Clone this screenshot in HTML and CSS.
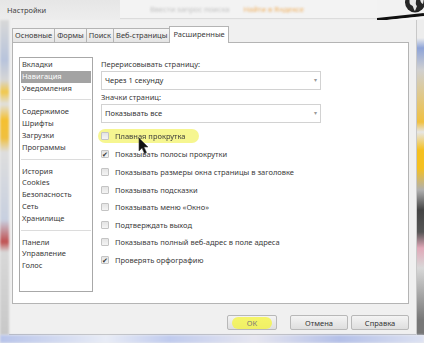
FILE: index.html
```html
<!DOCTYPE html>
<html lang="ru">
<head>
  <meta charset="UTF-8" />
  <title>Настройки</title>
  <link rel="stylesheet" href="styles.css">
</head>
<body>
  <div class="titlebar">
    <span class="title">Настройки</span>
    <div class="search">
      <span class="blur-gray">Ввести запрос поиска</span>
      <span class="blur-orange">Найти в Яндексе</span>
    </div>
    <svg class="corner" width="47" height="22" viewBox="0 0 47 22">
      <rect x="0" y="0" width="47" height="22" fill="#f2f2f2"/>
      <circle cx="38" cy="2.5" r="10" fill="#262626"/>
      <path d="M31 -4 C34 -1 31 3 34 5 C37 6 36 9 38 11 L40 6 C37 3 41 0 38 -4 Z" fill="#e6e6e6"/>
      <path d="M42 -2 C44 0 43 3 46 4 L47 -2 Z" fill="#e6e6e6"/>
      <path d="M0 19.5 L47 14.5" stroke="#111" stroke-width="3"/>
      <path d="M0 22 L47 17.5" stroke="#f8f8f8" stroke-width="2"/>
    </svg>
  </div>

  <div class="frame">
    <div class="edge-left"></div>

    <div class="dialog">
      <div class="tabs">
        <div class="tab">Основные</div>
        <div class="tab">Формы</div>
        <div class="tab">Поиск</div>
        <div class="tab">Веб-страницы</div>
        <div class="tab active">Расширенные</div>
      </div>

      <div class="panel">
        <!-- left category list -->
        <div class="listbox">
          <div class="group">
            <div class="item">Вкладки</div>
            <div class="item selected">Навигация</div>
            <div class="item">Уведомления</div>
          </div>
          <div class="group">
            <div class="item">Содержимое</div>
            <div class="item">Шрифты</div>
            <div class="item">Загрузки</div>
            <div class="item">Программы</div>
          </div>
          <div class="group">
            <div class="item">История</div>
            <div class="item">Cookies</div>
            <div class="item">Безопасность</div>
            <div class="item">Сеть</div>
            <div class="item">Хранилище</div>
          </div>
          <div class="group">
            <div class="item">Панели</div>
            <div class="item">Управление</div>
            <div class="item">Голос</div>
          </div>
        </div>

        <!-- navigation options -->
        <div class="options">
          <div class="label">Перерисовывать страницу:</div>
          <div class="select">Через 1 секунду <span class="arrow">▾</span></div>
          <div class="label">Значки страниц:</div>
          <div class="select">Показывать все <span class="arrow">▾</span></div>

          <div class="checks">
            <div class="check marked"><span class="box"></span>Плавная прокрутка</div>
            <div class="check"><span class="box on">✔</span>Показывать полосы прокрутки</div>
            <div class="check"><span class="box"></span>Показывать размеры окна страницы в заголовке</div>
            <div class="check"><span class="box"></span>Показывать подсказки</div>
            <div class="check"><span class="box"></span>Показывать меню «Окно»</div>
            <div class="check"><span class="box"></span>Подтверждать выход</div>
            <div class="check"><span class="box"></span>Показывать полный веб-адрес в поле адреса</div>
            <div class="check"><span class="box on">✔</span>Проверять орфографию</div>
          </div>
        </div>
      </div>

      <div class="buttons">
        <button class="btn ok"><span class="mark">ОК</span></button>
        <button class="btn">Отмена</button>
        <button class="btn">Справка</button>
      </div>
    </div>

    <div class="edge-right"></div>
  </div>

  <div class="taskbar"></div>

  <svg class="cursor" width="12" height="18" viewBox="0 0 12 18">
    <path d="M1 1 L1 14 L4 11 L6.5 16.5 L8.5 15.5 L6 10 L10 10 Z" fill="#111" stroke="#444" stroke-width="0.6"/>
  </svg>
</body>
</html>
```

FILE: styles.css
```css
body {
  margin: 0;
  width: 424px;
  height: 343px;
  overflow: hidden;
  background: #ececec;
  font-family: 'Noto Sans', sans-serif;
  font-size: 7.5px;
  color: #3a3a3a;
  position: relative;
}

.titlebar {
  height: 20px;
  display: flex;
  align-items: center;
  background: linear-gradient(#e6e6e6, #ededed);
}

.title {
  padding-left: 7px;
  width: 113px;
  flex-shrink: 0;
  color: #444;
}

.search {
  flex: 1;
  min-width: 0;
  height: 18px;
  align-self: flex-start;
  background: #f3f3f3;
  border-bottom: 1px solid #dcdcdc;
  display: flex;
  align-items: center;
  gap: 14px;
  padding-left: 30px;
  overflow: hidden;
}

.blur-gray {
  color: #c2c2c2;
  filter: blur(1.3px);
  white-space: nowrap;
}

.blur-orange {
  color: #f0b060;
  filter: blur(1.2px);
  white-space: nowrap;
}

.corner {
  align-self: flex-start;
  display: block;
  flex-shrink: 0;
}

.frame {
  display: flex;
  height: 315px;
}

.edge-left {
  width: 9px;
  background: linear-gradient(#d8d8d8 0, #b8c4dc 40px, #d6d6d6 60px, #f2c84a 72px, #e0e0e0 84px,
    #f5c030 100px, #f0c040 118px, #dedede 132px, #c8d0e0 200px, #c05050 222px, #d8d8d8 232px, #c8c8c8 315px);
  filter: blur(1px);
}

.edge-right {
  width: 7px;
  background: linear-gradient(#ededed 0, #ededed 18px, #8ea4d8 28px, #d0d0d0 50px, #f0c040 102px, #e6e6e6 112px,
    #f5c020 130px, #f5c020 148px, #b0b0b0 170px, #444 190px, #555 212px, #e0a8b8 228px, #d8d8d8 248px, #777 300px);
  border-left: 1px solid #c8c8c8;
  filter: blur(0.6px);
}

.dialog {
  flex: 1;
  background: #f0f0f0;
  padding: 6px 7px 0 3px;
  display: flex;
  flex-direction: column;
  border-bottom: 1px solid #b4b4b4;
}

.tabs {
  display: flex;
  align-items: flex-end;
  height: 16px;
  position: relative;
  z-index: 1;
}

.tab {
  height: 13px;
  line-height: 13px;
  padding: 0 2px;
  border: 1px solid #b4b4b4;
  border-bottom: none;
  margin-right: -1px;
  background: linear-gradient(#f6f6f6, #e4e4e4);
  color: #3a3a3a;
}

.tab.active {
  height: 16px;
  line-height: 15px;
  background: #fff;
  padding: 0 3px;
  margin-bottom: -1px;
}

.panel {
  height: 262px;
  background: #fff;
  border: 1px solid #b4b4b4;
  display: flex;
  gap: 8px;
  padding: 14px 0 0 6px;
  box-sizing: border-box;
}

.listbox {
  width: 74px;
  height: 235px;
  box-sizing: border-box;
  border: 1px solid #a8a8a8;
  padding: 1px 1px 0;
}

.group {
  padding: 0 0 5px;
  margin-bottom: 6px;
  border-bottom: 1px solid #dcdcdc;
}

.group:last-child {
  border-bottom: none;
}

.item {
  height: 11.8px;
  line-height: 11.8px;
  padding-left: 1px;
}

.item.selected {
  background: #a3a3a3;
  color: #fff;
}

.options {
  width: 220px;
}

.label {
  height: 13px;
  line-height: 13px;
  margin-top: 1px;
}

.select {
  height: 17px;
  line-height: 17px;
  border: 1px solid #d2d2d2;
  padding-left: 3px;
  margin-bottom: 1px;
  position: relative;
  color: #333;
}

.arrow {
  position: absolute;
  right: 3px;
  top: 0;
  color: #999;
  font-size: 6px;
}

.checks {
  margin-top: 6px;
}

.check {
  height: 17.6px;
  display: flex;
  align-items: center;
  gap: 6px;
}

.check.marked {
  background: rgba(240, 240, 70, 0.6);
  border-radius: 7px;
  width: 98px;
  margin-left: -3px;
  padding-left: 3px;
  height: 14px;
  margin-top: 1px;
  margin-bottom: 2.6px;
  filter: blur(0.3px);
}

.box {
  width: 8px;
  height: 8px;
  box-sizing: border-box;
  border: 1px solid #c4c4c4;
  border-radius: 1px;
  background: linear-gradient(#e4e4e4, #f4f4f4);
  font-size: 7px;
  line-height: 7px;
  color: #333;
  text-align: center;
}

.buttons {
  display: flex;
  justify-content: flex-end;
  gap: 3px;
  margin-top: 11px;
}

.btn {
  width: 58px;
  height: 15px;
  padding: 0;
  border: 1px solid #b8b8b8;
  border-radius: 2px;
  background: linear-gradient(#f4f4f4, #dedede);
  font-family: 'Noto Sans', sans-serif;
  font-size: 7.5px;
  color: #333;
}

.btn.ok {
  width: 50px;
  margin-right: 10px;
}

.mark {
  display: inline-block;
  padding: 1px 15px;
  border-radius: 6px;
  background: rgba(245, 245, 60, 0.75);
  color: #777;
}

.taskbar {
  height: 8px;
  background: linear-gradient(90deg, #b8c4ea, #e8ecf6 25%, #c0cbee 40%, #e6e6f0 60%, #b4c0e8 80%, #dde2f2);
  filter: blur(1px);
}

.cursor {
  position: absolute;
  left: 138px;
  top: 137px;
}
```
